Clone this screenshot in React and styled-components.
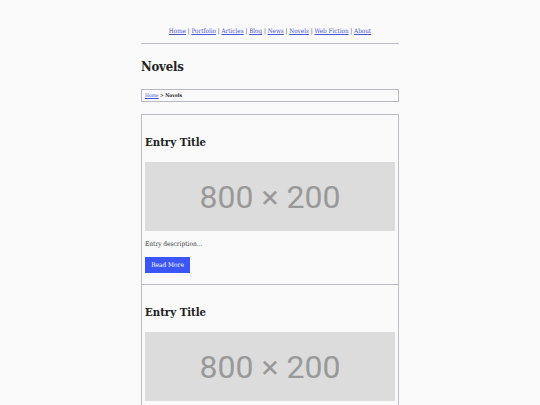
import React from "react";
import styled, { createGlobalStyle } from "styled-components";

const Global = createGlobalStyle`
  html, body { margin: 0; padding: 0; background: #fafafa; }
  body { font-family: "DejaVu Serif Condensed", "DejaVu Serif", serif; color: #222; }
`;

const Page = styled.div`
  width: 258px;
  margin: 0 auto;
`;

const Nav = styled.nav`
  padding: 26px 0 7px;
  border-bottom: 1px solid #bdbdc4;
  text-align: center;
  font-size: 6.3px;
  line-height: 10px;
  color: #444;
`;

const NavLink = styled.a`
  color: #4b55d6;
  text-decoration: underline;
`;

const Title = styled.h1`
  margin: 13px 0 0;
  font-size: 13px;
  letter-spacing: -0.2px;
  line-height: 20px;
  font-weight: bold;
  color: #222;
`;

const Crumbs = styled.div`
  margin-top: 12px;
  border: 1px solid #b8b8c2;
  padding: 2px 3px;
  font-size: 5px;
  line-height: 7px;
  color: #222;
`;

const CrumbLink = styled.a`
  color: #4b55d6;
  text-decoration: underline;
`;

const List = styled.div`
  margin-top: 12px;
`;

const Card = styled.article`
  border: 1px solid #bdbdc6;
  padding: 0 3px 11px;
  & + & { margin-top: -1px; }
`;

const EntryTitle = styled.h2`
  margin: 19px 0 0;
  font-size: 11.3px;
  line-height: 16px;
  font-weight: bold;
  color: #222;
`;

const Placeholder = styled.div`
  margin-top: 12px;
  height: 69px;
  background: #dcdcdc;
  color: #999;
  display: flex;
  align-items: center;
  justify-content: center;
  font-family: Roboto, "Liberation Sans", sans-serif;
  font-size: 32px;
`;

const Desc = styled.p`
  margin: 8px 0 0;
  font-size: 6.5px;
  line-height: 10px;
  color: #333;
`;

const Button = styled.a`
  display: inline-flex;
  align-items: center;
  justify-content: center;
  margin-top: 8px;
  width: 45px;
  height: 16px;
  background: #3b55f7;
  color: #fff;
  font-size: 6.5px;
  text-decoration: none;
`;

const links = ["Home", "Portfolio", "Articles", "Blog", "News", "Novels", "Web Fiction", "About"];

function Entry() {
  return (
    <Card>
      <EntryTitle>Entry Title</EntryTitle>
      <Placeholder>800 × 200</Placeholder>
      <Desc>Entry description...</Desc>
      <Button href="#">Read More</Button>
    </Card>
  );
}

export default function App() {
  return (
    <>
      <Global />
      <Page>
        <Nav>
          {links.map((l, i) => (
            <React.Fragment key={l}>
              {i > 0 && " | "}
              <NavLink href="#">{l}</NavLink>
            </React.Fragment>
          ))}
        </Nav>
        <Title>Novels</Title>
        <Crumbs>
          <CrumbLink href="#">Home</CrumbLink> &gt; <b>Novels</b>
        </Crumbs>
        <List>
          <Entry />
          <Entry />
          <Entry />
        </List>
      </Page>
    </>
  );
}
